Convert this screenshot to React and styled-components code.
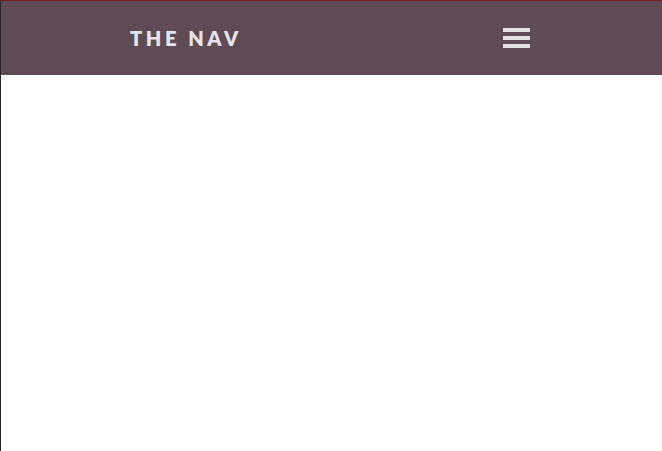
import React from "react";
import styled, { createGlobalStyle } from "styled-components";

const GlobalStyle = createGlobalStyle`
	html, body {
		margin: 0;
		padding: 0;
		background: #ffffff;
	}
	body {
		font-family: "Lato", "Open Sans", sans-serif;
	}
`;

const Page = styled.div`
	min-height: 451px;
	box-sizing: border-box;
	border-top: 1px solid #7d1a1f;
	border-left: 1px solid #2a2426;
`;

const Nav = styled.nav`
	height: 74px;
	background: #5f4b55;
	display: flex;
	justify-content: center;
	padding-right: 3px;
`;

const Inner = styled.div`
	width: 400px;
	display: flex;
	align-items: center;
	justify-content: space-between;
`;

const Brand = styled.a`
	color: #e6e3ea;
	font-size: 20px;
	font-weight: 800;
	letter-spacing: 3.6px;
	text-decoration: none;
	margin-top: -1px;
`;

const Burger = styled.button`
	display: flex;
	flex-direction: column;
	gap: 4px;
	padding: 0;
	border: none;
	background: none;
	margin-top: -1px;
	cursor: pointer;
`;

const Bar = styled.span`
	display: block;
	width: 27px;
	height: 4px;
	background: #e2e2e2;
`;

export default function App() {
	return (
		<>
			<GlobalStyle />
			<Page>
				<Nav>
					<Inner>
						<Brand href="#">THE NAV</Brand>
						<Burger aria-label="menu">
							<Bar />
							<Bar />
							<Bar />
						</Burger>
					</Inner>
				</Nav>
			</Page>
		</>
	);
}
